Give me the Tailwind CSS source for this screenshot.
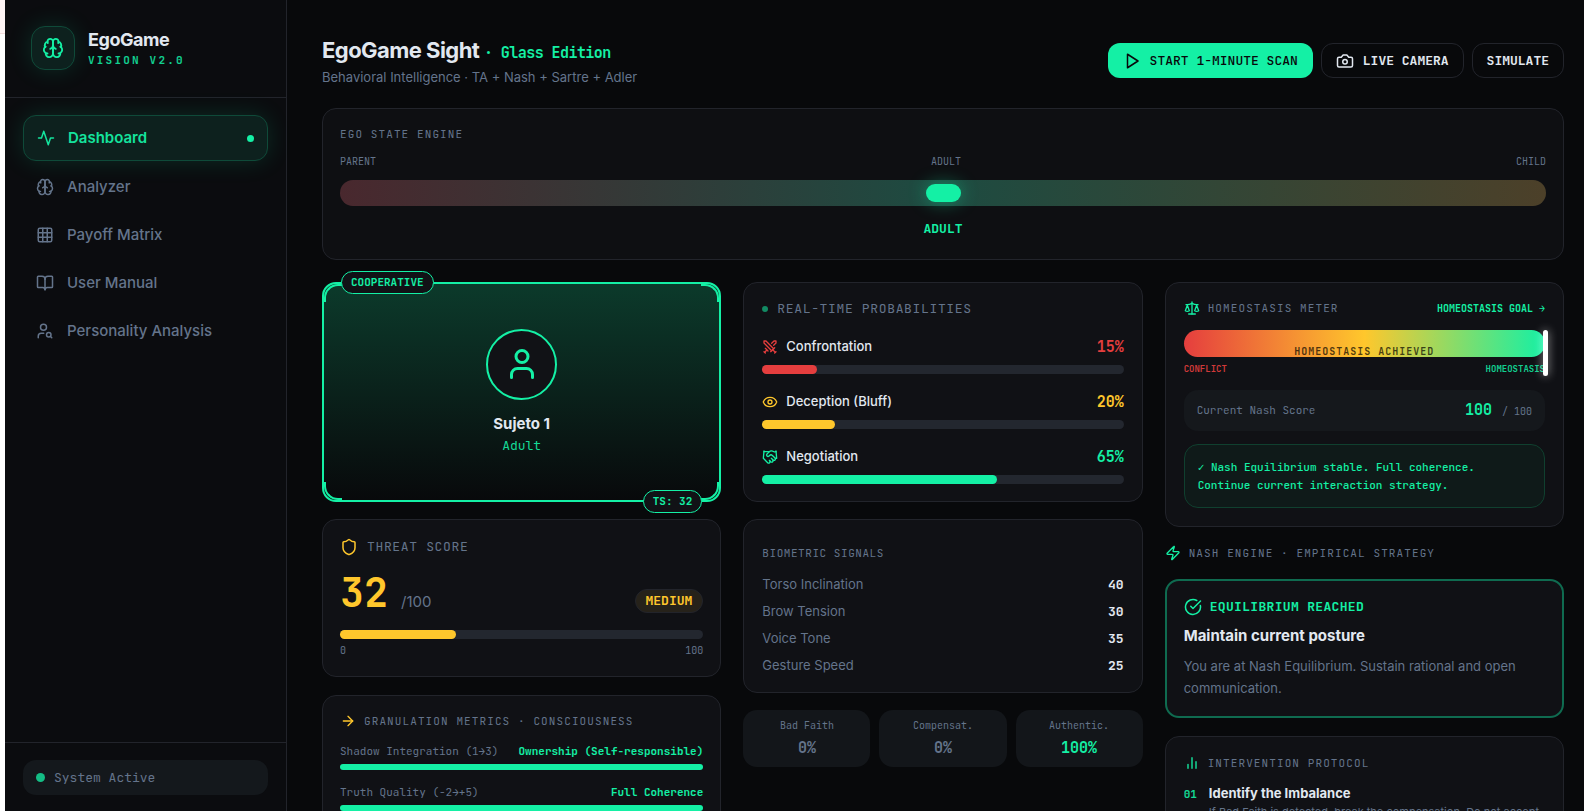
<!DOCTYPE html>
<html lang="en">
<head>
  <meta charset="UTF-8">
  <meta name="viewport" content="width=device-width, initial-scale=1.0">
  <title>EgoGame Sight</title>
  <script src="https://cdn.jsdelivr.net/npm/@tailwindcss/browser@4"></script>
</head>

<body class="h-screen overflow-hidden flex bg-[#08090b] text-slate-200 font-['Inter',sans-serif]">

  <!-- Shared icons -->
  <svg class="hidden">
    <symbol id="brain" viewBox="0 0 24 24">
      <path d="M12 5a3 3 0 1 0-5.997.125 4 4 0 0 0-2.526 5.77 4 4 0 0 0 .556 6.588A4 4 0 1 0 12 18Z"/>
      <path d="M12 5a3 3 0 1 1 5.997.125 4 4 0 0 1 2.526 5.77 4 4 0 0 1-.556 6.588A4 4 0 1 1 12 18Z"/>
      <path d="M15 13a4.5 4.5 0 0 1-3-4 4.5 4.5 0 0 1-3 4"/>
      <path d="M17.599 6.5a3 3 0 0 0 .399-1.375"/>
      <path d="M6.003 5.125A3 3 0 0 0 6.401 6.5"/>
      <path d="M3.477 10.896a4 4 0 0 1 .585-.396"/>
      <path d="M19.938 10.5a4 4 0 0 1 .585.396"/>
      <path d="M6 18a4 4 0 0 1-1.967-.516"/>
      <path d="M19.967 17.484A4 4 0 0 1 18 18"/>
    </symbol>
  </svg>

  <!-- Page edge -->
  <div class="w-[5px] shrink-0 bg-white">
    <div class="h-[34px] bg-[#fff5f5] border-b border-[#f3dcdc]"></div>
  </div>

  <!-- Sidebar -->
  <aside class="w-[282px] shrink-0 flex flex-col bg-[#0b0c0f] border-r border-[#22242b]">
    <div class="h-[98px] shrink-0 px-[26px] flex items-center gap-[13px] border-b border-[#22242b]">
      <div class="size-11 mb-px rounded-[14px] flex items-center justify-center bg-[#0d211e] border border-[#0f4a39] text-[#14f0a5] shadow-[0_0_24px_rgba(20,240,165,0.14)]">
        <svg class="size-[22px]" fill="none" stroke="currentColor" stroke-width="2" stroke-linecap="round" stroke-linejoin="round"><use href="#brain"/></svg>
      </div>
      <div class="mb-px">
        <div class="text-lg leading-6 font-bold tracking-tight">EgoGame</div>
        <div class="text-[11px] leading-[17px] font-semibold tracking-[0.2em] text-[#12cf90] font-['JetBrains_Mono','DejaVu_Sans_Mono',monospace]">VISION V2.0</div>
      </div>
    </div>

    <nav class="flex-1 px-[18px] pt-[17px] flex flex-col gap-1 text-[15px] font-medium text-[#64748b]">
      <a href="#" class="h-[46px] shrink-0 px-[13px] rounded-[13px] flex items-center gap-[13px] bg-[#0d211e] border border-[#0f4a39] font-semibold text-[#14e39d] shadow-[0_0_24px_rgba(20,240,165,0.14)]">
        <svg class="size-[18px]" viewBox="0 0 24 24" fill="none" stroke="currentColor" stroke-width="2" stroke-linecap="round" stroke-linejoin="round"><path d="M22 12h-4l-3 9L9 3l-3 9H2"/></svg>
        <span class="flex-1">Dashboard</span>
        <span class="size-[7px] rounded-full bg-[#14f0a5]"></span>
      </a>
      <a href="#" class="h-11 shrink-0 px-[13px] rounded-[13px] flex items-center gap-[13px]">
        <svg class="size-[18px]" fill="none" stroke="currentColor" stroke-width="2" stroke-linecap="round" stroke-linejoin="round"><use href="#brain"/></svg>
        <span>Analyzer</span>
      </a>
      <a href="#" class="h-11 shrink-0 px-[13px] rounded-[13px] flex items-center gap-[13px]">
        <svg class="size-[18px]" viewBox="0 0 24 24" fill="none" stroke="currentColor" stroke-width="2" stroke-linecap="round" stroke-linejoin="round"><rect width="18" height="18" x="3" y="3" rx="2"/><path d="M3 9h18M3 15h18M9 3v18M15 3v18"/></svg>
        <span>Payoff Matrix</span>
      </a>
      <a href="#" class="h-11 shrink-0 px-[13px] rounded-[13px] flex items-center gap-[13px]">
        <svg class="size-[18px]" viewBox="0 0 24 24" fill="none" stroke="currentColor" stroke-width="2" stroke-linecap="round" stroke-linejoin="round"><path d="M12 7v14"/><path d="M3 18a1 1 0 0 1-1-1V4a1 1 0 0 1 1-1h5a4 4 0 0 1 4 4 4 4 0 0 1 4-4h5a1 1 0 0 1 1 1v13a1 1 0 0 1-1 1h-6a3 3 0 0 0-3 3 3 3 0 0 0-3-3z"/></svg>
        <span>User Manual</span>
      </a>
      <a href="#" class="h-11 shrink-0 px-[13px] rounded-[13px] flex items-center gap-[13px]">
        <svg class="size-[18px]" viewBox="0 0 24 24" fill="none" stroke="currentColor" stroke-width="2" stroke-linecap="round" stroke-linejoin="round"><circle cx="10" cy="7" r="4"/><path d="M10.3 15H7a4 4 0 0 0-4 4v2"/><circle cx="17" cy="17" r="3"/><path d="m21 21-1.9-1.9"/></svg>
        <span>Personality Analysis</span>
      </a>
    </nav>

    <div class="px-[18px] pt-[17px] pb-4 border-t border-[#22242b]">
      <div class="h-[35px] px-[13px] rounded-[13px] flex items-center gap-[9px] bg-[#14181c] text-[13px] text-[#64748b] font-['JetBrains_Mono','DejaVu_Sans_Mono',monospace]">
        <span class="size-[9px] rounded-full bg-[#14bd85]"></span>
        System Active
      </div>
    </div>
  </aside>

  <!-- Main -->
  <main class="flex-1 min-w-0 pl-[35px] pr-5 pt-[35px]">
    <header class="flex items-center justify-between mb-[22px]">
      <div>
        <h1 class="text-[22px] leading-[30px] font-bold tracking-tight">EgoGame Sight <span class="text-[15px] font-semibold text-[#14f0a5] font-['JetBrains_Mono','DejaVu_Sans_Mono',monospace]">· Glass Edition</span></h1>
        <p class="text-[13px] leading-[18px] text-[#64748b]">Behavioral Intelligence · TA + Nash + Sartre + Adler</p>
      </div>
      <div class="flex gap-2 text-[13px] font-['JetBrains_Mono','DejaVu_Sans_Mono',monospace]">
        <button class="h-[35px] px-[15px] rounded-xl flex items-center gap-[9px] bg-[#14f0a5] text-[#08090b] font-medium">
          <svg class="size-[18px]" viewBox="0 0 24 24" fill="none" stroke="currentColor" stroke-width="2" stroke-linecap="round" stroke-linejoin="round"><path d="m6 3 14 9-14 9z"/></svg>
          START 1-MINUTE SCAN
        </button>
        <button class="h-[35px] px-[14px] rounded-xl flex items-center gap-[9px] border border-[#22242b] font-bold">
          <svg class="size-[18px]" viewBox="0 0 24 24" fill="none" stroke="currentColor" stroke-width="2" stroke-linecap="round" stroke-linejoin="round"><path d="M14.5 4h-5L7 7H4a2 2 0 0 0-2 2v9a2 2 0 0 0 2 2h16a2 2 0 0 0 2-2V9a2 2 0 0 0-2-2h-3z"/><circle cx="12" cy="13" r="3"/></svg>
          LIVE CAMERA
        </button>
        <button class="h-[35px] px-[14px] rounded-xl border border-[#22242b] font-bold">SIMULATE</button>
      </div>
    </header>

    <!-- Ego state -->
    <section class="h-[152px] px-[17px] pt-[17px] mb-[22px] rounded-[14px] bg-[#0e0f12] border border-[#22242b] text-[#64748b] font-['JetBrains_Mono','DejaVu_Sans_Mono',monospace]">
      <h2 class="text-[11px] leading-4 tracking-widest mb-3">EGO STATE ENGINE</h2>
      <div class="flex justify-between text-[10px] leading-4 mb-[10px]">
        <span>PARENT</span><span>ADULT</span><span>CHILD</span>
      </div>
      <div class="h-[26px] rounded-full flex items-center justify-center bg-linear-to-r/srgb from-[#49282e] via-[#1d4b41] to-[#4c4029]">
        <div class="w-[35px] h-[18px] rounded-full bg-[#14f0a5] shadow-[0_0_18px_rgba(20,240,165,0.4)]"></div>
      </div>
      <p class="mt-[13px] text-[13px] leading-5 font-bold text-center text-[#14f0a5]">ADULT</p>
    </section>

    <div class="grid grid-cols-3 gap-[22px] items-start">

      <!-- Column 1 -->
      <div class="flex flex-col">
        <section class="relative h-[220px] mb-[17px] rounded-[14px] border-2 border-[#14f0a5] bg-linear-to-b/srgb from-[#0c3a2b] to-[#08090b] flex flex-col items-center justify-center">
          <span class="absolute top-0 left-0 size-[18px] rounded-tl-[14px] border-t-2 border-l-2 border-[#14f0a5]"></span>
          <span class="absolute top-0 right-0 size-[18px] rounded-tr-[14px] border-t-2 border-r-2 border-[#14f0a5]"></span>
          <span class="absolute bottom-0 left-0 size-[18px] rounded-bl-[14px] border-b-2 border-l-2 border-[#14f0a5]"></span>
          <span class="absolute bottom-0 right-0 size-[18px] rounded-br-[14px] border-b-2 border-r-2 border-[#14f0a5]"></span>
          <span class="absolute -top-[13px] left-[17px] h-[23px] px-[9px] flex items-center rounded-full bg-[#111216] border border-[#14f0a5] text-[11px] font-bold text-[#14f0a5] font-['JetBrains_Mono','DejaVu_Sans_Mono',monospace]">COOPERATIVE</span>
          <span class="absolute -bottom-[13px] right-[17px] h-[23px] px-[9px] flex items-center rounded-full bg-[#111216] border border-[#14f0a5] text-[11px] font-bold text-[#14f0a5] font-['JetBrains_Mono','DejaVu_Sans_Mono',monospace]">TS: 32</span>
          <div class="size-[71px] mb-3 rounded-full border-2 border-[#14f0a5] bg-[#111216] text-[#14f0a5] flex items-center justify-center">
            <svg class="size-9" viewBox="0 0 24 24" fill="none" stroke="currentColor" stroke-width="2" stroke-linecap="round" stroke-linejoin="round"><path d="M19 21v-2a4 4 0 0 0-4-4H9a4 4 0 0 0-4 4v2"/><circle cx="12" cy="7" r="4"/></svg>
          </div>
          <p class="text-[15px] leading-6 font-bold">Sujeto 1</p>
          <p class="text-[13px] leading-5 text-[#14d996] font-['JetBrains_Mono','DejaVu_Sans_Mono',monospace]">Adult</p>
        </section>

        <section class="h-[158px] px-[17px] pt-[17px] mb-[18px] rounded-[14px] bg-[#101115] border border-[#22242b] text-[#64748b]">
          <div class="h-5 flex items-center gap-[9px]">
            <svg class="size-[18px] text-[#ffc72c]" viewBox="0 0 24 24" fill="none" stroke="currentColor" stroke-width="2" stroke-linecap="round" stroke-linejoin="round"><path d="M20 13c0 5-3.500 7.500-7.660 8.950a1 1 0 0 1-.670-.010C7.500 20.500 4 18 4 13V6a1 1 0 0 1 1-1c2 0 4.500-1.200 6.240-2.720a1.170 1.170 0 0 1 1.520 0C14.510 3.810 17 5 19 5a1 1 0 0 1 1 1z"/></svg>
            <h2 class="text-[13px] tracking-wider font-['JetBrains_Mono','DejaVu_Sans_Mono',monospace]">THREAT SCORE</h2>
          </div>
          <div class="mt-4 h-10 flex items-end justify-between">
            <div class="flex items-baseline gap-[13px]">
              <span class="text-[40px] leading-10 font-bold text-[#ffc72c] font-['JetBrains_Mono','DejaVu_Sans_Mono',monospace]">32</span>
              <span class="text-[15px]">/100</span>
            </div>
            <span class="h-6 px-[10px] flex items-center rounded-full bg-[#26221a] border border-[#22242b] text-[13px] font-bold text-[#ffc72c] font-['JetBrains_Mono','DejaVu_Sans_Mono',monospace]">MEDIUM</span>
          </div>
          <div class="mt-[17px] h-[9px] rounded-full bg-[#23272f]">
            <div class="h-full rounded-full bg-[#ffc72c]" style="width: 32%"></div>
          </div>
          <div class="mt-1 flex justify-between text-[10px] leading-4 font-['JetBrains_Mono','DejaVu_Sans_Mono',monospace]">
            <span>0</span><span>100</span>
          </div>
        </section>

        <section class="h-[170px] px-[17px] pt-[17px] rounded-[14px] bg-[#101115] border border-[#22242b] text-[11px] text-[#64748b] font-['JetBrains_Mono','DejaVu_Sans_Mono',monospace]">
          <div class="h-4 mb-3 flex items-center gap-2">
            <svg class="size-4 text-[#ffc72c]" viewBox="0 0 24 24" fill="none" stroke="currentColor" stroke-width="2" stroke-linecap="round" stroke-linejoin="round"><path d="M5 12h14"/><path d="m12 5 7 7-7 7"/></svg>
            <h2 class="tracking-widest">GRANULATION METRICS · CONSCIOUSNESS</h2>
          </div>
          <div class="flex justify-between leading-5">
            <span>Shadow Integration (1→3)</span>
            <span class="font-bold text-[#14f0a5]">Ownership (Self-responsible)</span>
          </div>
          <div class="mt-[3px] mb-3 h-[6px] rounded-full bg-[#14f0a5]"></div>
          <div class="flex justify-between leading-5">
            <span>Truth Quality (-2→+5)</span>
            <span class="font-bold text-[#14f0a5]">Full Coherence</span>
          </div>
          <div class="mt-[3px] h-[6px] rounded-full bg-[#14f0a5]"></div>
        </section>
      </div>

      <!-- Column 2 -->
      <div class="flex flex-col">
        <section class="h-[220px] px-[18px] pt-[17px] mb-[17px] rounded-[14px] bg-[#101115] border border-[#22242b]">
          <div class="h-[18px] mb-[18px] flex items-center gap-[9px] text-[#64748b]">
            <span class="size-[6px] rounded-full bg-[#128a63]"></span>
            <h2 class="text-[13px] tracking-wider font-['JetBrains_Mono','DejaVu_Sans_Mono',monospace]">REAL-TIME PROBABILITIES</h2>
          </div>
          <div class="flex flex-col gap-[17px]">
            <div class="text-[#e53e3e]">
              <div class="h-[22px] mb-[7px] flex items-center gap-2">
                <svg class="size-4" viewBox="0 0 24 24" fill="none" stroke="currentColor" stroke-width="2" stroke-linecap="round" stroke-linejoin="round"><path d="M14.500 17.500 3 6V3h3l11.500 11.500"/><path d="m13 19 6-6"/><path d="m16 16 4 4"/><path d="m19 21 2-2"/><path d="M14.500 6.500 18 3h3v3l-3.500 3.500"/><path d="m5 14 4 4"/><path d="m7 17-3 3"/><path d="m3 19 2 2"/></svg>
                <span class="flex-1 text-[13px] font-medium text-slate-200">Confrontation</span>
                <span class="text-[15px] font-bold font-['JetBrains_Mono','DejaVu_Sans_Mono',monospace]">15%</span>
              </div>
              <div class="h-[9px] rounded-full bg-[#23272f]"><div class="h-full rounded-full bg-current" style="width: 15%"></div></div>
            </div>
            <div class="text-[#ffc72c]">
              <div class="h-[22px] mb-[7px] flex items-center gap-2">
                <svg class="size-4" viewBox="0 0 24 24" fill="none" stroke="currentColor" stroke-width="2" stroke-linecap="round" stroke-linejoin="round"><path d="M2.062 12.348a1 1 0 0 1 0-.696 10.750 10.750 0 0 1 19.876 0 1 1 0 0 1 0 .696 10.750 10.750 0 0 1-19.876 0"/><circle cx="12" cy="12" r="3"/></svg>
                <span class="flex-1 text-[13px] font-medium text-slate-200">Deception (Bluff)</span>
                <span class="text-[15px] font-bold font-['JetBrains_Mono','DejaVu_Sans_Mono',monospace]">20%</span>
              </div>
              <div class="h-[9px] rounded-full bg-[#23272f]"><div class="h-full rounded-full bg-current" style="width: 20%"></div></div>
            </div>
            <div class="text-[#14f0a5]">
              <div class="h-[22px] mb-[7px] flex items-center gap-2">
                <svg class="size-4" viewBox="0 0 24 24" fill="none" stroke="currentColor" stroke-width="2" stroke-linecap="round" stroke-linejoin="round"><path d="m11 17 2 2a1 1 0 1 0 3-3"/><path d="m14 14 2.500 2.500a1 1 0 1 0 3-3l-3.880-3.880a3 3 0 0 0-4.240 0l-.880.880a1 1 0 1 1-3-3l2.810-2.810a5.790 5.790 0 0 1 7.060-.870l.470.280a2 2 0 0 0 1.420.250L21 4"/><path d="m21 3 1 11h-2"/><path d="M3 3 2 14l6.500 6.500a1 1 0 1 0 3-3"/><path d="M3 4h8"/></svg>
                <span class="flex-1 text-[13px] font-medium text-slate-200">Negotiation</span>
                <span class="text-[15px] font-bold font-['JetBrains_Mono','DejaVu_Sans_Mono',monospace]">65%</span>
              </div>
              <div class="h-[9px] rounded-full bg-[#23272f]"><div class="h-full rounded-full bg-current" style="width: 65%"></div></div>
            </div>
          </div>
        </section>

        <section class="h-[174px] px-[18px] pt-[25px] mb-[17px] rounded-[14px] bg-[#101115] border border-[#22242b] text-[#64748b]">
          <h2 class="mb-[10px] text-[11px] leading-4 tracking-wider font-['JetBrains_Mono','DejaVu_Sans_Mono',monospace]">BIOMETRIC SIGNALS</h2>
          <table class="w-full text-[13px]">
            <tr class="h-[27px]"><th scope="row" class="p-0 text-left font-normal">Torso Inclination</th><td class="p-0 text-right font-bold text-slate-200 font-['JetBrains_Mono','DejaVu_Sans_Mono',monospace]">40</td></tr>
            <tr class="h-[27px]"><th scope="row" class="p-0 text-left font-normal">Brow Tension</th><td class="p-0 text-right font-bold text-slate-200 font-['JetBrains_Mono','DejaVu_Sans_Mono',monospace]">30</td></tr>
            <tr class="h-[27px]"><th scope="row" class="p-0 text-left font-normal">Voice Tone</th><td class="p-0 text-right font-bold text-slate-200 font-['JetBrains_Mono','DejaVu_Sans_Mono',monospace]">35</td></tr>
            <tr class="h-[27px]"><th scope="row" class="p-0 text-left font-normal">Gesture Speed</th><td class="p-0 text-right font-bold text-slate-200 font-['JetBrains_Mono','DejaVu_Sans_Mono',monospace]">25</td></tr>
          </table>
        </section>

        <div class="grid grid-cols-3 gap-[9px] text-center text-[#64748b] font-['JetBrains_Mono','DejaVu_Sans_Mono',monospace]">
          <div class="h-[57px] pt-2 rounded-[14px] bg-[#13161a]">
            <p class="text-[10px] leading-4">Bad Faith</p>
            <p class="mt-1 text-[15px] leading-5 font-semibold">0%</p>
          </div>
          <div class="h-[57px] pt-2 rounded-[14px] bg-[#13161a]">
            <p class="text-[10px] leading-4">Compensat.</p>
            <p class="mt-1 text-[15px] leading-5 font-semibold">0%</p>
          </div>
          <div class="h-[57px] pt-2 rounded-[14px] bg-[#13161a]">
            <p class="text-[10px] leading-4">Authentic.</p>
            <p class="mt-1 text-[15px] leading-5 font-bold text-[#14f0a5]">100%</p>
          </div>
        </div>
      </div>

      <!-- Column 3 -->
      <div class="flex flex-col">
        <section class="px-[18px] pt-[17px] pb-[18px] mb-[18px] rounded-[14px] bg-[#101115] border border-[#22242b] font-['JetBrains_Mono','DejaVu_Sans_Mono',monospace]">
          <div class="h-4 mb-[14px] flex items-center">
            <svg class="size-4 mr-2 text-[#14f0a5]" viewBox="0 0 24 24" fill="none" stroke="currentColor" stroke-width="2" stroke-linecap="round" stroke-linejoin="round"><path d="m16 16 3-8 3 8c-.870.650-1.920 1-3 1s-2.130-.350-3-1Z"/><path d="m2 16 3-8 3 8c-.870.650-1.920 1-3 1s-2.130-.350-3-1Z"/><path d="M7 21h10"/><path d="M12 3v18"/><path d="M3 7h2c2 0 5-1 7-2 2 1 5 2 7 2h2"/></svg>
            <h2 class="flex-1 text-[11px] tracking-widest text-[#64748b]">HOMEOSTASIS METER</h2>
            <span class="text-[10px] font-bold text-[#14f0a5]">HOMEOSTASIS GOAL →</span>
          </div>
          <div class="relative mb-[14px]">
            <div class="h-[27px] overflow-hidden rounded-full flex items-end justify-center bg-linear-to-r/srgb from-[#e53e3e] via-[#ffc72c] to-[#14f0a5] text-[10px] leading-[10px] font-semibold tracking-widest text-black/70">HOMEOSTASIS ACHIEVED</div>
            <div class="mt-[5px] flex justify-between text-[9px] leading-[14px] font-semibold">
              <span class="text-[#cf3939]">CONFLICT</span><span class="text-[#12cf90]">HOMEOSTASIS</span>
            </div>
            <div class="absolute top-0 -right-[3px] w-[5px] h-[46px] rounded-full bg-white shadow-[0_0_10px_rgba(255,255,255,0.6)]"></div>
          </div>
          <div class="h-[41px] px-[13px] mb-[13px] rounded-[14px] flex items-center justify-between bg-[#15181c] text-[#64748b]">
            <span class="text-[11px]">Current Nash Score</span>
            <span class="text-[10px]"><b class="mr-1 text-[15px] text-[#14f0a5]">100</b> / 100</span>
          </div>
          <p class="p-[13px] rounded-[14px] bg-[#0f1a19] border border-[#10402f] text-[11px] leading-[18px] font-medium text-[#14f0a5]">✓ Nash Equilibrium stable. Full coherence.<br>Continue current interaction strategy.</p>
        </section>

        <div class="h-4 mb-[18px] flex items-center gap-2">
          <svg class="size-4 text-[#14f0a5]" viewBox="0 0 24 24" fill="none" stroke="currentColor" stroke-width="2" stroke-linecap="round" stroke-linejoin="round"><path d="M4 14a1 1 0 0 1-.780-1.630l9.900-10.200a.5.5 0 0 1 .860.460l-1.920 6.020A1 1 0 0 0 13 10h7a1 1 0 0 1 .780 1.630l-9.900 10.200a.5.5 0 0 1-.860-.460l1.920-6.020A1 1 0 0 0 11 14z"/></svg>
          <h2 class="text-[11px] tracking-widest text-[#64748b] font-['JetBrains_Mono','DejaVu_Sans_Mono',monospace]">NASH ENGINE · EMPIRICAL STRATEGY</h2>
        </div>

        <section class="h-[139px] px-[17px] pt-[17px] mb-[18px] rounded-[14px] bg-[#101115] border-2 border-[#0f6b50]">
          <div class="h-[18px] mb-2 flex items-center gap-2 text-[#14f0a5]">
            <svg class="size-[18px]" viewBox="0 0 24 24" fill="none" stroke="currentColor" stroke-width="2" stroke-linecap="round" stroke-linejoin="round"><path d="M21.801 10A10 10 0 1 1 17 3.335"/><path d="m9 11 3 3L22 4"/></svg>
            <span class="text-[13px] font-bold tracking-wide font-['JetBrains_Mono','DejaVu_Sans_Mono',monospace]">EQUILIBRIUM REACHED</span>
          </div>
          <h3 class="text-[15px] leading-6 font-bold">Maintain current posture</h3>
          <p class="mt-[7px] text-[13px] leading-[22px] text-[#64748b]">You are at Nash Equilibrium. Sustain rational and open communication.</p>
        </section>

        <section class="h-[170px] px-[18px] pt-[18px] rounded-[14px] bg-[#101115] border border-[#22242b]">
          <div class="h-4 mb-3 flex items-center gap-2">
            <svg class="size-4 text-[#14f0a5]" viewBox="0 0 24 24" fill="none" stroke="currentColor" stroke-width="2" stroke-linecap="round" stroke-linejoin="round"><path d="M18 20V10M12 20V4M6 20v-6"/></svg>
            <h2 class="text-[11px] tracking-widest text-[#64748b] font-['JetBrains_Mono','DejaVu_Sans_Mono',monospace]">INTERVENTION PROTOCOL</h2>
          </div>
          <div class="flex gap-3">
            <span class="text-[11px] leading-[22px] font-bold text-[#14d996] font-['JetBrains_Mono','DejaVu_Sans_Mono',monospace]">01</span>
            <div class="flex-1">
              <h3 class="text-[13px] leading-5 font-bold">Identify the Imbalance</h3>
              <p class="text-[11px] leading-[18px] text-[#64748b]">If Bad Faith is detected, break the compensation. Do not accept</p>
            </div>
          </div>
        </section>
      </div>
    </div>
  </main>
</body>
</html>
